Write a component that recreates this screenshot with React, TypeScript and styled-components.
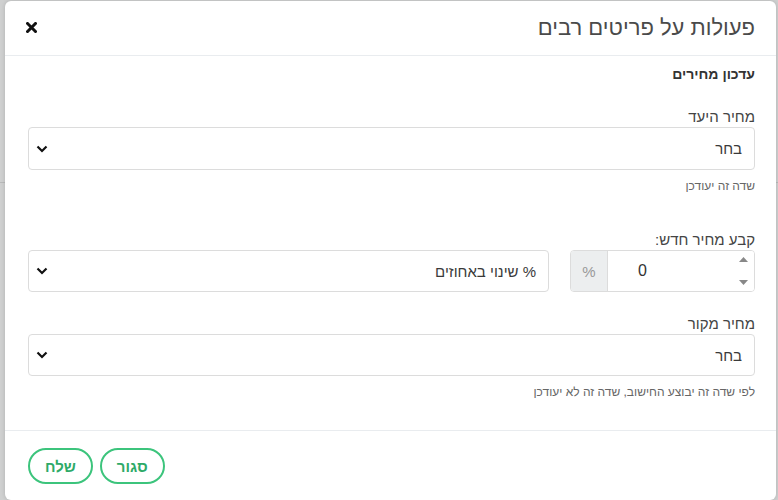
import styled, { createGlobalStyle } from "styled-components";

const GlobalStyle = createGlobalStyle`
  html, body {
    margin: 0;
    padding: 0;
    background: #cfd0d0;
    font-family: "Liberation Sans", "DejaVu Sans", sans-serif;
  }
  * {
    box-sizing: border-box;
  }
`;

// backdrop behind the dialog, with the faint line of the page under it
const Page = styled.div`
  width: 778px;
  height: 500px;
  overflow: hidden;
  padding: 1px 2px 0 5px;
  background: linear-gradient(
    to bottom,
    transparent 182px,
    #b9baba 182px,
    #b9baba 183px,
    transparent 183px
  );
`;

const Modal = styled.div`
  direction: rtl;
  background: #fff;
  border-radius: 6px;
  box-shadow: 0 0 4px rgba(0, 0, 0, 0.15);
  height: 499px;
`;

const Header = styled.div`
  display: flex;
  align-items: center;
  justify-content: space-between;
  height: 55px;
  padding: 0 21px 1px 19px;
  border-bottom: 1px solid #e9ecef;
`;

const Title = styled.h5`
  margin: 0;
  font-size: 22px;
  font-weight: 400;
  color: #4a4a4a;
`;

const CloseButton = styled.button`
  display: flex;
  align-items: center;
  justify-content: center;
  width: 14px;
  height: 14px;
  padding: 0;
  border: none;
  background: none;
  cursor: pointer;
`;

const Body = styled.div`
  padding: 8px 21px 30px 23px;
`;

const SectionTitle = styled.div`
  font-size: 14px;
  font-weight: 700;
  line-height: 20px;
  color: #333;
  margin-bottom: 23px;
`;

const Group = styled.div<{ gap?: number }>`
  margin-bottom: ${(p) => p.gap ?? 0}px;
`;

const Label = styled.div`
  font-size: 15px;
  line-height: 20px;
  color: #444;
`;

const Help = styled.div`
  font-size: 12px;
  line-height: 16px;
  margin-top: 8px;
  color: #666;
`;

const SelectBox = styled.div<{ h?: number }>`
  display: flex;
  align-items: center;
  justify-content: space-between;
  height: ${(p) => p.h ?? 43}px;
  padding: 0 12px 0 7px;
  border: 1px solid #dcdcdc;
  border-radius: 4px;
  background: #fff;
  font-size: 15px;
  color: #3a3a3a;
`;

const Row = styled.div`
  display: grid;
  grid-template-columns: 185px 1fr;
  gap: 21px;
`;

const NumberGroup = styled.div`
  display: flex;
  height: 42px;
  border: 1px solid #dcdcdc;
  border-radius: 4px;
  overflow: hidden;
`;

const NumberField = styled.div`
  flex: 1;
  display: flex;
  align-items: center;
  justify-content: space-between;
  padding: 0 3px 0 0;
  font-size: 16px;
  color: #333;
  background: #fff;
`;

const NumberValue = styled.span`
  margin-left: 30px;
`;

const Spinner = styled.div`
  display: flex;
  flex-direction: column;
  justify-content: space-between;
  align-items: center;
  height: 100%;
  width: 15px;
  padding: 6px 0 6px;
`;

const Addon = styled.div`
  display: flex;
  align-items: center;
  justify-content: center;
  width: 37px;
  background: #eceeef;
  border-right: 1px solid #dcdcdc;
  color: #999;
  font-size: 15px;
`;

const Footer = styled.div`
  display: flex;
  justify-content: flex-end;
  gap: 7px;
  padding: 17px 22px 0 23px;
  border-top: 1px solid #e9ecef;
`;

const OutlineButton = styled.button`
  height: 36px;
  padding: 0 15px;
  border: 2px solid #3cc47c;
  border-radius: 18px;
  background: #fff;
  color: #2eaa68;
  font-family: inherit;
  font-size: 15px;
  font-weight: 700;
  cursor: pointer;
`;

function Chevron() {
  return (
    <svg width="12" height="8" viewBox="0 0 12 8">
      <path d="M1.5 1.5 6 6l4.5-4.5" fill="none" stroke="#111" strokeWidth="2.2" />
    </svg>
  );
}

function CloseIcon() {
  return (
    <svg width="11" height="11" viewBox="0 0 11 11">
      <path d="M1.5 1.5l8 8M9.5 1.5l-8 8" stroke="#111" strokeWidth="3" strokeLinecap="square" />
    </svg>
  );
}

function SpinArrow({ up }: { up?: boolean }) {
  return (
    <svg width="9" height="5" viewBox="0 0 9 5">
      <path d={up ? "M0 5L4.5 0 9 5z" : "M0 0l4.5 5L9 0z"} fill="#888" />
    </svg>
  );
}

export default function App() {
  return (
    <Page>
      <GlobalStyle />
      <Modal>
        <Header>
          <Title>פעולות על פריטים רבים</Title>
          <CloseButton aria-label="סגור">
            <CloseIcon />
          </CloseButton>
        </Header>

        <Body>
          <SectionTitle>עדכון מחירים</SectionTitle>

          <Group gap={36}>
            <Label>מחיר היעד</Label>
            <SelectBox>
              <span>בחר</span>
              <Chevron />
            </SelectBox>
            <Help>שדה זה יעודכן</Help>
          </Group>

          <Group gap={22}>
            <Label>קבע מחיר חדש:</Label>
            <Row>
              <NumberGroup>
                <NumberField>
                  <Spinner>
                    <SpinArrow up />
                    <SpinArrow />
                  </Spinner>
                  <NumberValue>0</NumberValue>
                </NumberField>
                <Addon>%</Addon>
              </NumberGroup>
              <SelectBox h={42}>
                <span>% שינוי באחוזים</span>
                <Chevron />
              </SelectBox>
            </Row>
          </Group>

          <Group>
            <Label>מחיר מקור</Label>
            <SelectBox h={42}>
              <span>בחר</span>
              <Chevron />
            </SelectBox>
            <Help>לפי שדה זה יבוצע החישוב, שדה זה לא יעודכן</Help>
          </Group>
        </Body>

        <Footer>
          <OutlineButton>סגור</OutlineButton>
          <OutlineButton>שלח</OutlineButton>
        </Footer>
      </Modal>
    </Page>
  );
}
